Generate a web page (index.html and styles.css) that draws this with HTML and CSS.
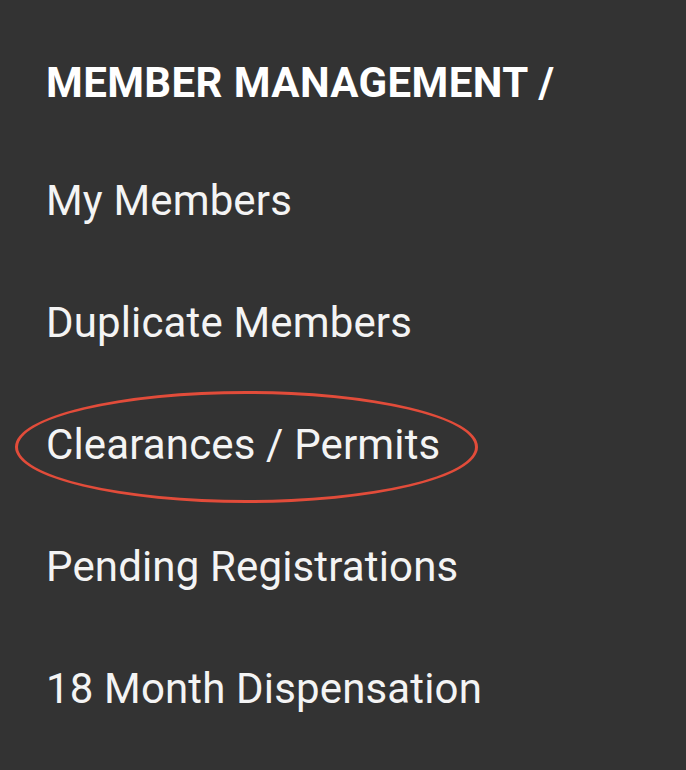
FILE: index.html
```html
<!DOCTYPE html>
<html lang="en">
<head>
    <meta charset="UTF-8">
    <meta name="viewport" content="width=device-width, initial-scale=1.0">
    <title>Member Management</title>
    <link rel="stylesheet" href="styles.css">
</head>
<body>
    <nav class="side-menu">
        <h2 class="menu-title">MEMBER MANAGEMENT /</h2>
        <ul class="menu-list">
            <li class="menu-item">My Members</li>
            <li class="menu-item">Duplicate Members</li>
            <li class="menu-item highlighted">
                Clearances / Permits
                <span class="circle-mark"></span>
            </li>
            <li class="menu-item">Pending Registrations</li>
            <li class="menu-item">18 Month Dispensation</li>
        </ul>
    </nav>
</body>
</html>
```

FILE: styles.css
```css
html, body {
    margin: 0;
    padding: 0;
    background-color: #333333;
}
body {
    height: 770px;
    overflow: hidden;
}
.side-menu {
    padding: 53px 0 0 46px;
    font-family: Roboto, "Liberation Sans", sans-serif;
    color: #f4f4f4;
}
.menu-title {
    margin: 0;
    font-size: 42px;
    font-weight: 700;
    line-height: 60px;
    letter-spacing: 0.4px;
    color: #ffffff;
}
.menu-list {
    list-style: none;
    margin: 27px 0 0;
    padding: 0;
}
.menu-item {
    position: relative;
    font-size: 42px;
    line-height: 122px;
    letter-spacing: 0.15px;
    white-space: nowrap;
}
/* red hand-drawn ring around the item */
.circle-mark {
    position: absolute;
    left: -31px;
    top: 7px;
    width: 457px;
    height: 106px;
    border: 3px solid #e24c3a;
    border-radius: 50%;
}
```
